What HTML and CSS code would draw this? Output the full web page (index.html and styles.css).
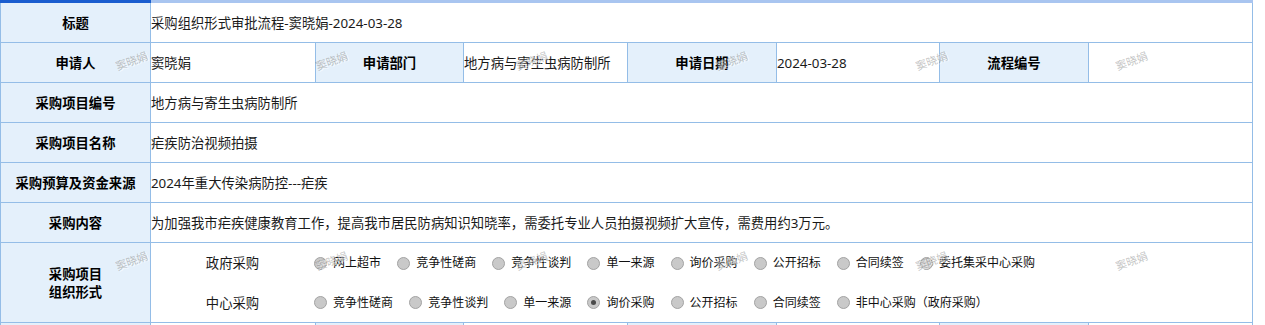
FILE: index.html
```html
<!DOCTYPE html>
<html lang="zh-CN">
<head>
<meta charset="utf-8">
<title>采购组织形式审批流程</title>
<link rel="stylesheet" href="styles.css">
</head>
<body>
<div class="sheet">
  <table class="form">
    <colgroup>
      <col class="w-a"><col class="w-b"><col class="w-c"><col class="w-d">
      <col class="w-e"><col class="w-f"><col class="w-g"><col class="w-h">
    </colgroup>
    <tr class="row-head">
      <th>标题</th>
      <td colspan="7">采购组织形式审批流程-窦晓娟-2024-03-28</td>
    </tr>
    <tr>
      <th>申请人</th>
      <td>窦晓娟</td>
      <th>申请部门</th>
      <td>地方病与寄生虫病防制所</td>
      <th>申请日期</th>
      <td>2024-03-28</td>
      <th>流程编号</th>
      <td></td>
    </tr>
    <tr>
      <th>采购项目编号</th>
      <td colspan="7">地方病与寄生虫病防制所</td>
    </tr>
    <tr>
      <th>采购项目名称</th>
      <td colspan="7">疟疾防治视频拍摄</td>
    </tr>
    <tr>
      <th>采购预算及资金来源</th>
      <td colspan="7">2024年重大传染病防控---疟疾</td>
    </tr>
    <tr>
      <th>采购内容</th>
      <td colspan="7">为加强我市疟疾健康教育工作，提高我市居民防病知识知晓率，需委托专业人员拍摄视频扩大宣传，需费用约3万元。</td>
    </tr>
    <tr class="row-org">
      <th>采购项目<br>组织形式</th>
      <td colspan="7">
        <div class="org">
          <div class="org-line">
            <span class="org-name">政府采购</span>
            <label class="opt"><input type="radio" name="gov" disabled> 网上超市</label>
            <label class="opt"><input type="radio" name="gov" disabled> 竞争性磋商</label>
            <label class="opt"><input type="radio" name="gov" disabled> 竞争性谈判</label>
            <label class="opt"><input type="radio" name="gov" disabled> 单一来源</label>
            <label class="opt"><input type="radio" name="gov" disabled> 询价采购</label>
            <label class="opt"><input type="radio" name="gov" disabled> 公开招标</label>
            <label class="opt"><input type="radio" name="gov" disabled> 合同续签</label>
            <label class="opt"><input type="radio" name="gov" disabled> 委托集采中心采购</label>
          </div>
          <div class="org-line">
            <span class="org-name">中心采购</span>
            <label class="opt"><input type="radio" name="center" disabled> 竞争性磋商</label>
            <label class="opt"><input type="radio" name="center" disabled> 竞争性谈判</label>
            <label class="opt"><input type="radio" name="center" disabled> 单一来源</label>
            <label class="opt"><input type="radio" name="center" disabled checked> 询价采购</label>
            <label class="opt"><input type="radio" name="center" disabled> 公开招标</label>
            <label class="opt"><input type="radio" name="center" disabled> 合同续签</label>
            <label class="opt"><input type="radio" name="center" disabled> 非中心采购（政府采购）</label>
          </div>
        </div>
      </td>
    </tr>
    <tr class="row-next">
      <th></th>
      <td></td>
      <th></th>
      <td></td>
      <th></th>
      <td></td>
      <th></th>
      <td></td>
    </tr>
  </table>

  <div class="watermark" aria-hidden="true">
    <span>窦晓娟</span><span>窦晓娟</span><span>窦晓娟</span><span>窦晓娟</span><span>窦晓娟</span><span>窦晓娟</span>
    <span>窦晓娟</span><span>窦晓娟</span><span>窦晓娟</span><span>窦晓娟</span><span>窦晓娟</span><span>窦晓娟</span>
  </div>
</div>
</body>
</html>
```

FILE: styles.css
```css
html, body {
  margin: 0;
  padding: 0;
  background: #fff;
}

body {
  font-family: "Noto Sans", "Noto Sans CJK SC", sans-serif;
  font-size: 13.33px;
  color: #1a1a1a;
}

.sheet {
  position: relative;
  width: 1253px;
  overflow: hidden;
}

/* approval form table */
.form {
  width: 1253px;
  table-layout: fixed;
  border-collapse: collapse;
}

.w-a { width: 150px; }
.w-b { width: 165px; }
.w-c { width: 148px; }
.w-d { width: 164px; }
.w-e { width: 149px; }
.w-f { width: 163px; }
.w-g { width: 149px; }
.w-h { width: 164px; }

.form th,
.form td {
  border: 1px solid #94bde7;
  padding: 0;
  height: 39px;
  vertical-align: middle;
  line-height: 18px;
}

.form th {
  background: #e4f0fb;
  font-weight: bold;
  text-align: center;
  color: #000;
}

.form td {
  text-align: left;
  background: #fff;
}

/* coloured tab edge along the top of the form */
.row-head th {
  border-top: 3px solid #1a5dcf;
}

.row-head td {
  border-top: 3px solid #a9c5f0;
}

.row-org th,
.row-org td {
  height: 79px;
}

/* purchase organisation options */
.org {
  display: grid;
  grid-template-rows: 40px 39px;
}

.org-line {
  display: flex;
  align-items: center;
}

.org-name {
  width: 163px;
  flex: none;
  text-align: center;
  color: #1a1a1a;
}

.opt {
  display: inline-flex;
  align-items: center;
  margin-right: 16px;
  font-size: 12px;
  color: #111;
  white-space: pre;
}

.opt input {
  appearance: none;
  -webkit-appearance: none;
  box-sizing: border-box;
  width: 13px;
  height: 13px;
  margin: 0 3px 0 0;
  border: 1px solid #a3a3a3;
  border-radius: 50%;
  background: #c9c9c9;
  position: relative;
}

.opt input:checked::after {
  content: "";
  position: absolute;
  left: 3px;
  top: 3px;
  width: 5px;
  height: 5px;
  border-radius: 50%;
  background: #4a4a4a;
}

/* repeating name watermark over the form */
.watermark {
  position: absolute;
  top: 0;
  left: 0;
  width: 1253px;
  height: 400px;
  pointer-events: none;
  display: grid;
  grid-template-columns: repeat(6, 200px);
  grid-template-rows: 200px 200px;
  justify-content: start;
  padding: 53px 0 0 115px;
  box-sizing: border-box;
}

.watermark span {
  display: block;
  justify-self: start;
  align-self: start;
  width: 34px;
  font-family: "Noto Sans CJK SC", sans-serif;
  font-size: 11px;
  line-height: 15px;
  white-space: nowrap;
  color: rgba(120, 120, 120, 0.45);
  text-shadow: 1px 1px 0 rgba(255, 255, 255, 0.7);
  transform: rotate(-20deg);
}
```
